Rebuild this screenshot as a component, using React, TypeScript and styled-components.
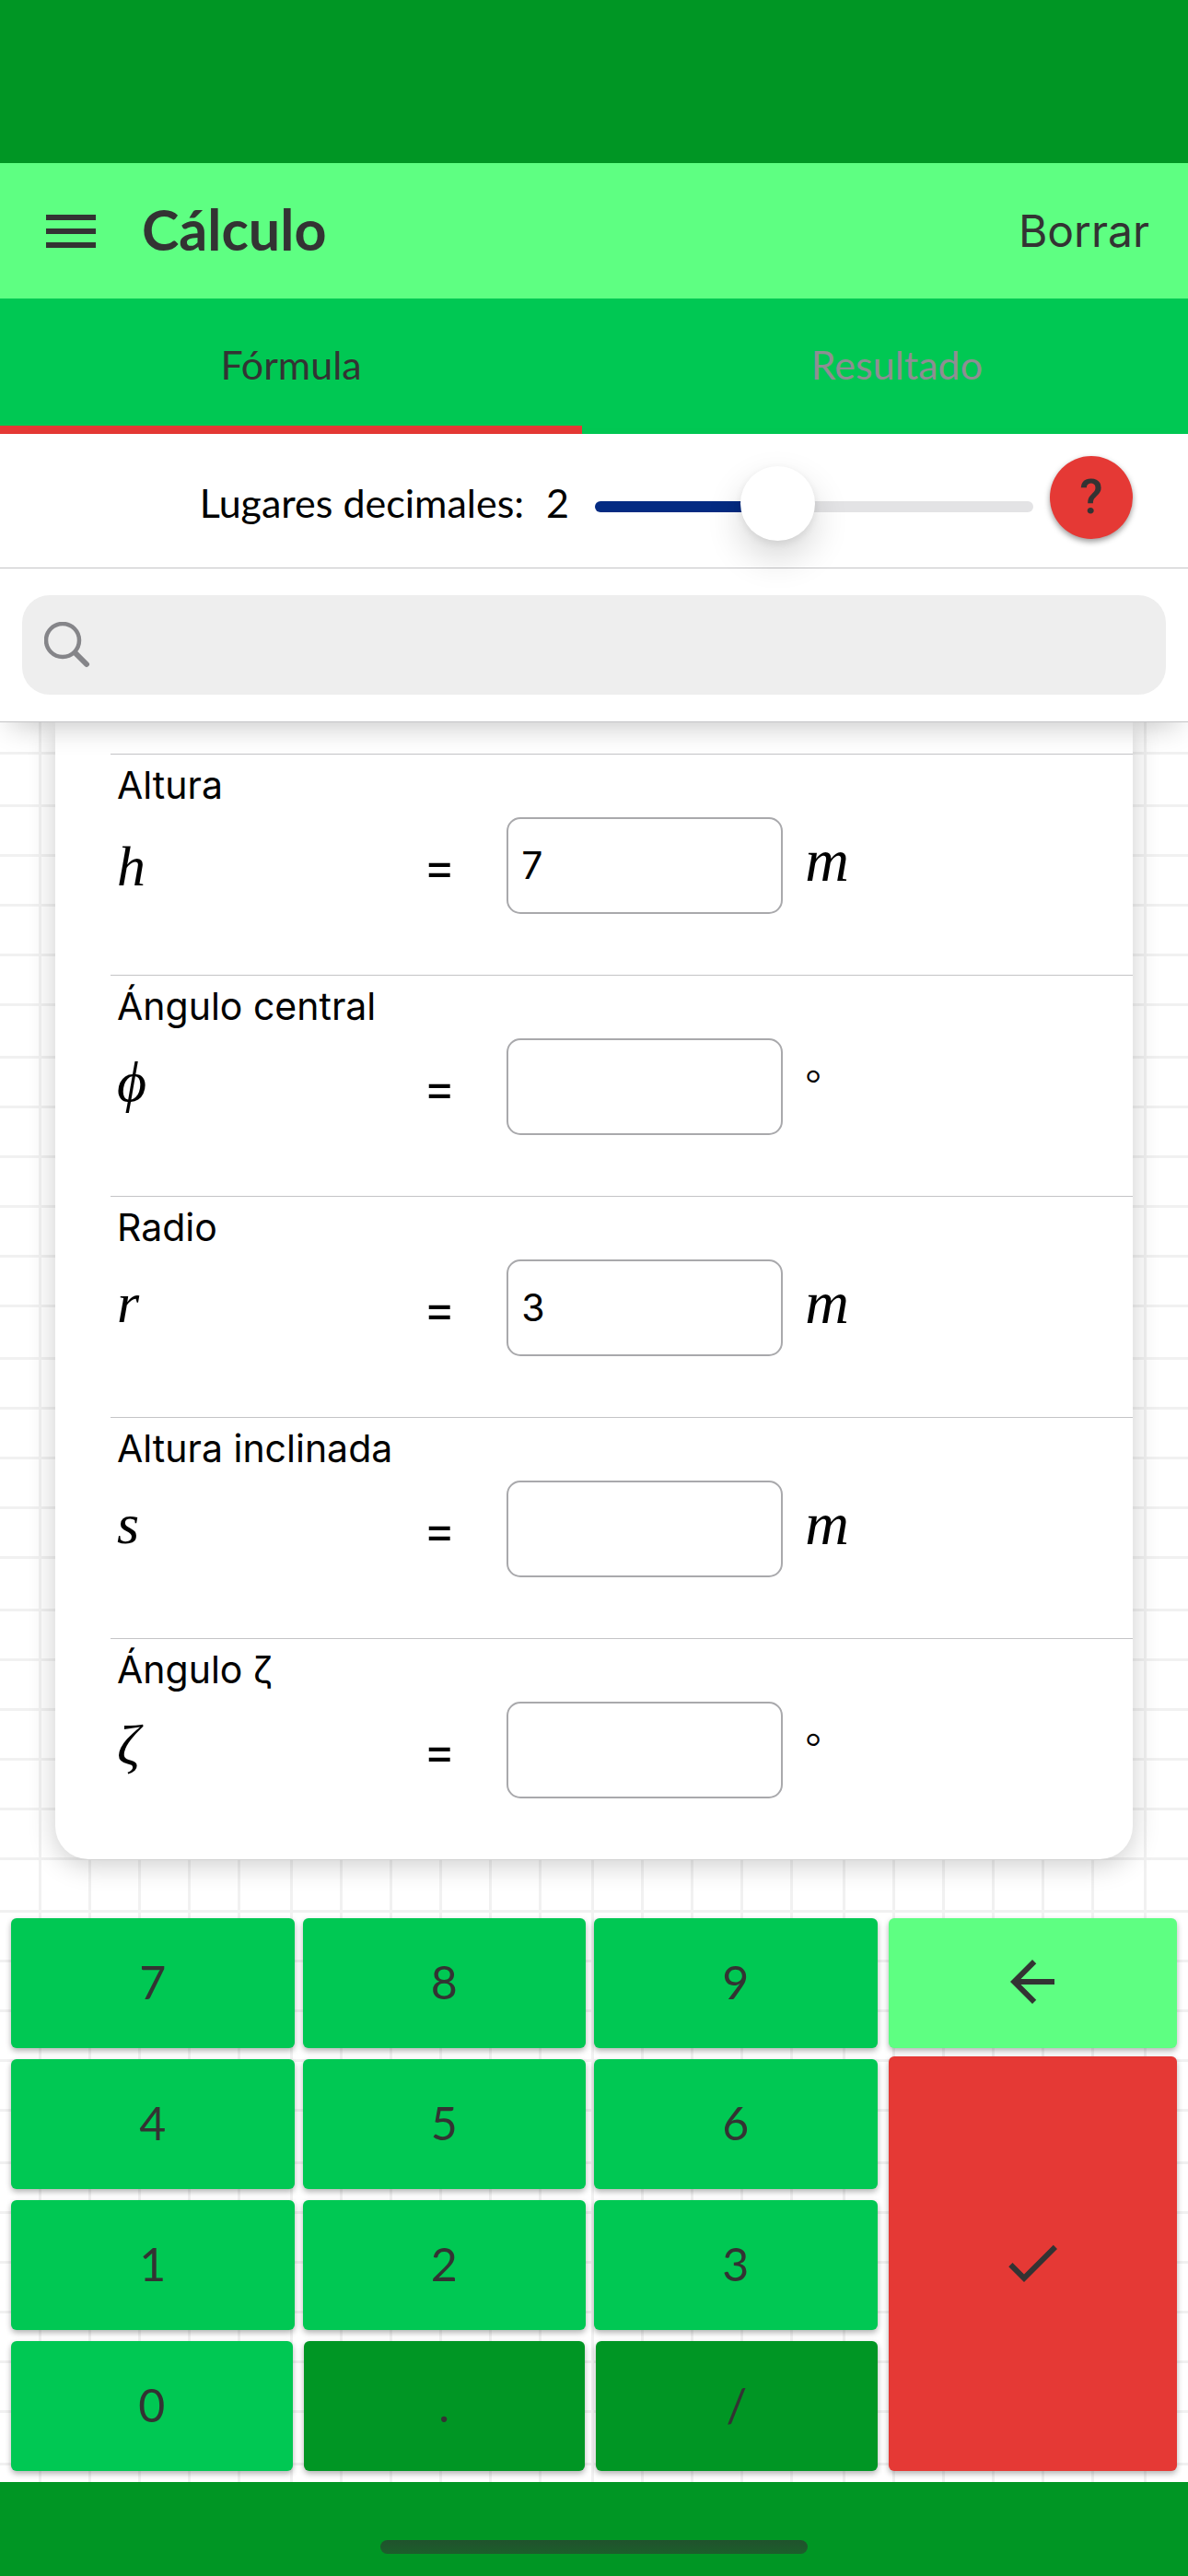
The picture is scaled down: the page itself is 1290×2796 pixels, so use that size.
import React, { useState } from "react";
import styled, { createGlobalStyle, css } from "styled-components";
import { MdArrowBack, MdCheck, MdMenu } from "react-icons/md";

const color = {
  primary: "#00c853",
  primaryLight: "#5eff82",
  primaryDark: "#009624",
  accent: "#e53935",
  ink: "#333333",
  line: "#c4c4c6",
  track: "#042b82",
};

const sans = `Inter, "Liberation Sans", sans-serif`;
const display = `Lato, "Open Sans", sans-serif`;
const math = `"Liberation Serif", "DejaVu Serif", serif`;

/* Squared-paper background: the pattern repeats every 600px in both directions. */
const gridStops = [0, 54, 108, 162, 216, 273, 327, 381, 435, 489, 543]
  .map(
    (at) =>
      `transparent ${at}px, #f1f1f1 ${at}px, #f1f1f1 ${at + 3}px, transparent ${at + 3}px`
  )
  .join(", ");

const GlobalStyle = createGlobalStyle`
  *, *::before, *::after { box-sizing: border-box; }
  body { margin: 0; background: #ffffff; }
  button, input { font: inherit; color: inherit; }
  button { border: 0; padding: 0; cursor: pointer; }
`;

const Screen = styled.div`
  display: flex;
  flex-direction: column;
  min-height: 100vh;
  background: #ffffff;
  color: #000000;
  font-family: ${sans};
`;

const StatusBar = styled.div`
  height: 177px;
  background: ${color.primaryDark};
`;

const AppBar = styled.header`
  display: flex;
  align-items: center;
  height: 147px;
  padding: 0 42px 0 41px;
  background: ${color.primaryLight};
  color: ${color.ink};
`;

const MenuButton = styled.button`
  display: flex;
  margin-right: 41px;
  background: none;
`;

const Title = styled.h1`
  flex: 1;
  margin: 0;
  padding-bottom: 4px;
  font: 700 61px/72px ${display};
`;

const ClearButton = styled.button`
  background: none;
  font: 400 48px/60px ${sans};
`;

const Tabs = styled.div`
  display: flex;
  justify-content: space-between;
  height: 147px;
  background: ${color.primary};
`;

const Tab = styled.button<{ $active: boolean }>`
  width: 49%;
  padding-top: 5px;
  border-bottom: 9px solid ${(p) => (p.$active ? color.accent : color.primary)};
  background: none;
  color: ${(p) => (p.$active ? color.ink : "#8e8e93")};
  font: 400 43px/54px ${display};
`;

const Toolbar = styled.div`
  position: relative;
  z-index: 1;
  background: #ffffff;
  box-shadow: 0 15px 30px -12px rgba(0, 0, 0, 0.24);
`;

const DecimalsRow = styled.div`
  display: flex;
  align-items: center;
  justify-content: flex-end;
  height: 146px;
  padding: 4px 60px 0;
  border-bottom: 1px solid ${color.line};
`;

const DecimalsLabel = styled.label`
  display: flex;
  gap: 24px;
  margin-right: 28px;
  font: 400 43px/54px ${display};
`;

const Slider = styled.input`
  flex: 0 1 476px;
  min-width: 0;
  height: 90px;
  margin: 9px 18px 0 0;
  appearance: none;
  background: transparent;

  &::-webkit-slider-runnable-track {
    height: 12px;
    border-radius: 6px;
    background: linear-gradient(
      to right,
      ${color.track} var(--filled),
      #e3e3e5 var(--filled)
    );
  }

  &::-webkit-slider-thumb {
    appearance: none;
    width: 81px;
    height: 81px;
    margin-top: -38px;
    border-radius: 50%;
    background: #ffffff;
    box-shadow: 0 18px 39px rgba(0, 0, 0, 0.16), 0 3px 9px rgba(0, 0, 0, 0.08);
  }
`;

const HelpButton = styled.button`
  width: 90px;
  height: 90px;
  margin-bottom: 12px;
  border-radius: 50%;
  background: ${color.accent};
  box-shadow: 0 3px 6px rgba(0, 0, 0, 0.4);
  color: ${color.ink};
  font: 500 52px/60px Roboto, ${sans};
`;

const SearchRow = styled.div`
  padding: 29px 24px;
  border-bottom: 1px solid ${color.line};
`;

const SearchField = styled.label`
  display: flex;
  align-items: center;
  gap: 18px;
  height: 108px;
  padding: 0 24px;
  border-radius: 30px;
  background: #eeeeee;
`;

const SearchInput = styled.input`
  flex: 1;
  min-width: 0;
  border: 0;
  outline: 0;
  background: none;
  font: 400 42px/54px ${sans};
`;

const Paper = styled.div`
  display: flex;
  flex: 1;
  flex-direction: column;
  background-image: linear-gradient(to right, ${gridStops}),
    linear-gradient(to bottom, ${gridStops});
  background-position: 42px 89px;
  background-size: 600px 600px;
`;

const Content = styled.main`
  flex: 1;
  padding: 0 60px 52px;
`;

const Card = styled.section`
  padding: 34px 0 0 60px;
  border-radius: 0 0 36px 36px;
  background: #ffffff;
  box-shadow: 0 6px 30px rgba(0, 0, 0, 0.2);
`;

const FieldRow = styled.div`
  height: 240px;
  padding: 7px 0 0 7px;
  border-top: 1px solid ${color.line};
`;

const FieldLabel = styled.label`
  display: block;
  font: 400 41px/52px ${sans};
`;

const Equation = styled.div`
  display: grid;
  grid-template-columns: 30% 8% 300px 1fr;
  align-items: center;
  column-gap: 2px;
  height: 122px;
`;

const glyph = css<{ $edge: "cap" | "ex" }>`
  justify-self: start;
  margin-top: 4px;
  text-box: trim-both ${(p) => p.$edge} alphabetic;
  font-family: ${math};
  font-style: italic;
`;

const Symbol = styled.span<{ $edge: "cap" | "ex" }>`
  ${glyph}
  font-size: 62px;
  line-height: 72px;
`;

const Unit = styled.span<{ $edge: "cap" | "ex"; $small: boolean }>`
  ${glyph}
  margin-left: 22px;
  font-size: ${(p) => (p.$small ? 44 : 66)}px;
  font-style: ${(p) => (p.$small ? "normal" : "italic")};
  line-height: 72px;
`;

const Equals = styled.span`
  margin-top: 4px;
  font: 400 52px/60px ${sans};
`;

const ValueInput = styled.input`
  width: 100%;
  height: 105px;
  padding: 0 14px;
  border: 2px solid #a9a9ac;
  border-radius: 15px;
  outline: 0;
  background: #ffffff;
  font: 400 41px/52px ${sans};
`;

const Keypad = styled.div`
  display: flex;
  gap: 12px;
  padding: 12px;
`;

const DigitKeys = styled.div`
  display: flex;
  flex: 3;
  flex-direction: column;
  gap: 12px;
`;

const KeyRow = styled.div<{ $gap: number }>`
  display: grid;
  grid-template-columns: repeat(3, 1fr);
  gap: ${(p) => p.$gap}px;
`;

const ActionKeys = styled.div`
  display: flex;
  flex: 1;
  flex-direction: column;
  gap: 9px;
`;

const Key = styled.button<{ $tone: string; $fill?: boolean }>`
  display: flex;
  flex: ${(p) => (p.$fill ? "1" : "none")};
  align-items: center;
  justify-content: center;
  height: 141px;
  padding-bottom: 3px;
  border-radius: 6px;
  background: ${(p) => p.$tone};
  box-shadow: 0 3px 6px rgba(0, 0, 0, 0.3);
  color: ${color.ink};
  font: 400 50px/60px ${display};
`;

const HomeArea = styled.footer`
  display: flex;
  align-items: flex-end;
  justify-content: center;
  height: 102px;
  padding-bottom: 24px;
  background: ${color.primaryDark};
`;

const HomeIndicator = styled.div`
  width: 36%;
  height: 15px;
  border-radius: 8px;
  background: linear-gradient(to bottom, #20522d, #1c5f2b);
`;

type Field = {
  id: string;
  label: string;
  symbol: string;
  unit: string;
  tall?: boolean;
};

const fields: Field[] = [
  { id: "h", label: "Altura", symbol: "h", unit: "m", tall: true },
  { id: "phi", label: "Ángulo central", symbol: "ϕ", unit: "°" },
  { id: "r", label: "Radio", symbol: "r", unit: "m" },
  { id: "s", label: "Altura inclinada", symbol: "s", unit: "m" },
  { id: "zeta", label: "Ángulo ζ", symbol: "ζ", unit: "°" },
];

const keyRows = [
  ["7", "8", "9"],
  ["4", "5", "6"],
  ["1", "2", "3"],
  ["0", ".", "/"],
];

const MAX_DECIMALS = 5;

function SearchIcon() {
  return (
    <svg width="50" height="50" viewBox="0 0 50 50" fill="none" stroke="#858589" aria-hidden="true">
      <circle cx="20" cy="20" r="18" strokeWidth="4.5" />
      <path d="M34 34L46 46" strokeWidth="6" strokeLinecap="round" />
      <path d="M32 32L36 36" strokeWidth="5" />
    </svg>
  );
}

export default function App() {
  const [decimals, setDecimals] = useState(2);
  const [tab, setTab] = useState("Fórmula");
  const [active, setActive] = useState("h");
  const [values, setValues] = useState<Record<string, string>>({ h: "7", r: "3" });

  const setValue = (id: string, value: string) =>
    setValues((current) => ({ ...current, [id]: value }));
  const activeValue = values[active] ?? "";

  return (
    <Screen>
      <GlobalStyle />
      <StatusBar />
      <AppBar>
        <MenuButton aria-label="Menú">
          <MdMenu size={72} />
        </MenuButton>
        <Title>Cálculo</Title>
        <ClearButton onClick={() => setValues({})}>Borrar</ClearButton>
      </AppBar>
      <Tabs role="tablist">
        {["Fórmula", "Resultado"].map((name) => (
          <Tab
            key={name}
            role="tab"
            aria-selected={tab === name}
            $active={tab === name}
            onClick={() => setTab(name)}
          >
            {name}
          </Tab>
        ))}
      </Tabs>
      <Toolbar>
        <DecimalsRow>
          <DecimalsLabel htmlFor="decimals">
            <span>Lugares decimales:</span>
            <span>{decimals}</span>
          </DecimalsLabel>
          <Slider
            id="decimals"
            type="range"
            min={0}
            max={MAX_DECIMALS}
            value={decimals}
            onChange={(e) => setDecimals(Number(e.target.value))}
            style={{ "--filled": `${(decimals / MAX_DECIMALS) * 100}%` } as React.CSSProperties}
          />
          <HelpButton aria-label="Ayuda">?</HelpButton>
        </DecimalsRow>
        <SearchRow>
          <SearchField>
            <SearchIcon />
            <SearchInput type="text" aria-label="Buscar" />
          </SearchField>
        </SearchRow>
      </Toolbar>
      <Paper>
        <Content>
          <Card>
            {fields.map((f) => (
              <FieldRow key={f.id}>
                <FieldLabel htmlFor={f.id}>{f.label}</FieldLabel>
                <Equation>
                  <Symbol $edge={f.tall ? "cap" : "ex"}>{f.symbol}</Symbol>
                  <Equals>=</Equals>
                  <ValueInput
                    id={f.id}
                    inputMode="none"
                    value={values[f.id] ?? ""}
                    onFocus={() => setActive(f.id)}
                    onChange={(e) => setValue(f.id, e.target.value)}
                  />
                  <Unit $edge="ex" $small={f.unit === "°"}>
                    {f.unit}
                  </Unit>
                </Equation>
              </FieldRow>
            ))}
          </Card>
        </Content>
        <Keypad>
          <DigitKeys>
            {keyRows.map((row) => (
              <KeyRow key={row[0]} $gap={row[0] === "0" ? 12 : 9}>
                {row.map((k) => (
                  <Key
                    key={k}
                    $tone={k === "." || k === "/" ? color.primaryDark : color.primary}
                    onClick={() => setValue(active, activeValue + k)}
                  >
                    {k}
                  </Key>
                ))}
              </KeyRow>
            ))}
          </DigitKeys>
          <ActionKeys>
            <Key
              $tone={color.primaryLight}
              aria-label="Retroceso"
              onClick={() => setValue(active, activeValue.slice(0, -1))}
            >
              <MdArrowBack size={72} />
            </Key>
            <Key $tone={color.accent} $fill aria-label="Calcular" onClick={() => setTab("Resultado")}>
              <MdCheck size={72} />
            </Key>
          </ActionKeys>
        </Keypad>
      </Paper>
      <HomeArea>
        <HomeIndicator />
      </HomeArea>
    </Screen>
  );
}
